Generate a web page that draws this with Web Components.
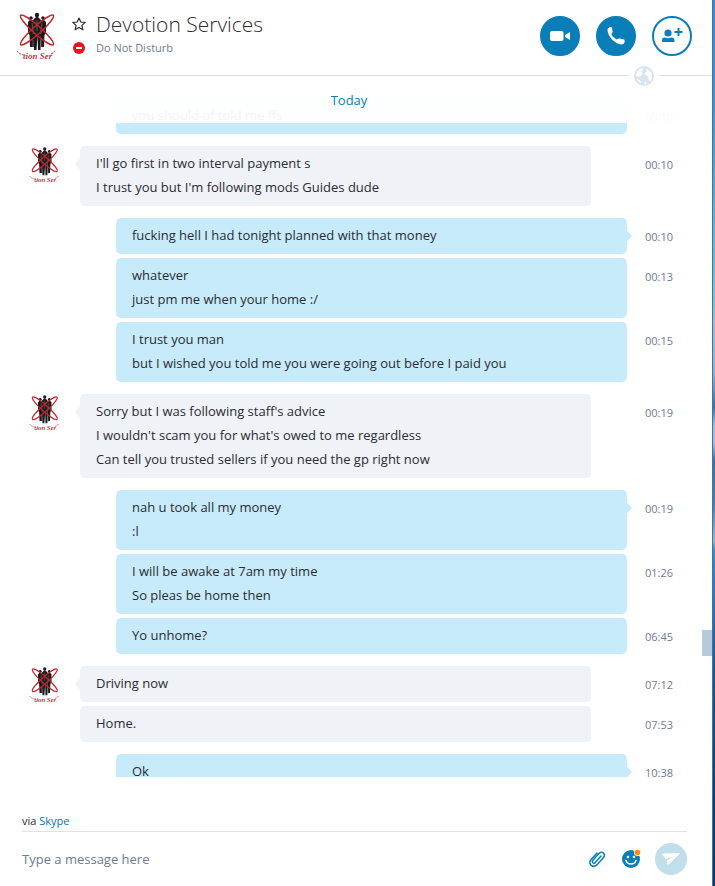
<!DOCTYPE html>
<html lang="en">
<head>
<meta charset="utf-8">
<meta name="viewport" content="width=device-width, initial-scale=1">
<title>Devotion Services</title>
<style>
    body {
        margin: 0;
        font-family: "Open Sans", "Noto Sans", sans-serif;
        font-size: 13px;
        color: #2b2c33;
        --brand: #0a7eb9;
        --line: #d9e4ec;
        --muted: #6e7b91;
        --sent: #c7ebfb;
        --received: #eff2f7;
    }
    p {
        margin: 0;
    }
</style>
</head>
<body>

<chat-window>
    <chat-header slot="header" name="Devotion Services" status="Do Not Disturb"></chat-header>
    <chat-group from="me">
        <chat-message time="00:10"><p>you should of told me ffs</p></chat-message>
    </chat-group>
    <chat-group from="them">
        <chat-message time="00:10"><p>I'll go first in two interval payment s</p><p>I trust you but I'm following mods Guides dude</p></chat-message>
    </chat-group>
    <chat-group from="me">
        <chat-message time="00:10"><p>fucking hell I had tonight planned with that money</p></chat-message>
        <chat-message time="00:13"><p>whatever</p><p>just pm me when your home :/</p></chat-message>
        <chat-message time="00:15"><p>I trust you man</p><p>but I wished you told me you were going out before I paid you</p></chat-message>
    </chat-group>
    <chat-group from="them">
        <chat-message time="00:19"><p>Sorry but I was following staff's advice</p><p>I wouldn't scam you for what's owed to me regardless</p><p>Can tell you trusted sellers if you need the gp right now</p></chat-message>
    </chat-group>
    <chat-group from="me">
        <chat-message time="00:19"><p>nah u took all my money</p><p>:l</p></chat-message>
        <chat-message time="01:26"><p>I will be awake at 7am my time</p><p>So pleas be home then</p></chat-message>
        <chat-message time="06:45"><p>Yo unhome?</p></chat-message>
    </chat-group>
    <chat-group from="them">
        <chat-message time="07:12"><p>Driving now</p></chat-message>
        <chat-message time="07:53"><p>Home.</p></chat-message>
    </chat-group>
    <chat-group from="me">
        <chat-message time="10:38"><p>Ok</p></chat-message>
    </chat-group>
    <chat-composer slot="footer"></chat-composer>
</chat-window>

<script>
class ChatAvatar extends HTMLElement {
    constructor() {
        super();
        this.attachShadow({ mode: 'open' });
        this.shadowRoot.innerHTML = `
            <style>
                :host {
                    display: block;
                    width: 40px;
                }
                svg {
                    display: block;
                    width: 100%;
                    overflow: visible;
                }
                text {
                    font: italic bold 9px "Liberation Serif", serif;
                    fill: #b8403f;
                }
            </style>
            <svg viewBox="0 0 40 50" aria-hidden="true">
                <g fill="#1b1a1c">
                    <circle cx="21" cy="4" r="2.2"/>
                    <circle cx="15" cy="7" r="1.8"/>
                    <circle cx="27" cy="7" r="1.8"/>
                    <path d="M17 9l3-3h2l3 3 2 12-2 2-.5 16H22l-.5-14-1 14H18l-.5-16-2-2z"/>
                    <path d="M12 11l2-2h3l1 3v24h-4l-.5-12-1.500-2zM25 12l.5-3H28l2 2v11l-1.500 2-.5 12h-3z"/>
                </g>
                <path d="M21 9v11M16 12l1.500 11M26 12l-1.500 11M17 29v7M25 29v7" stroke="#999" stroke-width=".5" fill="none"/>
                <g fill="none" stroke="#c3282c" stroke-width="1.5">
                    <ellipse cx="21" cy="19" rx="22" ry="4" transform="rotate(42 21 19)"/>
                    <ellipse cx="21" cy="19" rx="22" ry="4" transform="rotate(-42 21 19)"/>
                </g>
                <path d="M1 40q2 3 7 4M35 43q3-1 4-3" fill="none" stroke="#c3282c" stroke-width="1" stroke-dasharray="2 1"/>
                <text x="7" y="48">tion Ser</text>
            </svg>
        `;
    }
}

class ChatHeader extends HTMLElement {
    constructor() {
        super();
        this.attachShadow({ mode: 'open' });
        this.shadowRoot.innerHTML = `
            <style>
                :host {
                    display: block;
                    position: relative;
                    border-bottom: 1px solid var(--line);
                }
                header {
                    display: flex;
                    align-items: center;
                    gap: 16px;
                    padding: 11px 20px 14px 16px;
                }
                .contact {
                    flex: 1;
                    display: grid;
                    grid-template-columns: 14px 1fr;
                    grid-template-rows: 24px 24px;
                    column-gap: 10px;
                    align-items: center;
                    justify-items: start;
                }
                h1 {
                    margin: 0;
                    font: 300 21px/24px "Open Sans", sans-serif;
                    white-space: nowrap;
                }
                .status {
                    font-size: 11px;
                    line-height: 20px;
                    color: var(--muted);
                }
                svg {
                    display: block;
                }
                button {
                    display: grid;
                    place-items: center;
                    padding: 0;
                    border: 0;
                    background: none;
                    color: inherit;
                    cursor: pointer;
                }
                .actions {
                    display: flex;
                    gap: 16px;
                }
                .actions button {
                    width: 40px;
                    height: 40px;
                    border: 2px solid var(--brand);
                    border-radius: 50%;
                    background: var(--brand);
                    color: #fff;
                }
                .actions .outline {
                    background: #fff;
                    color: var(--brand);
                }
                .globe {
                    position: absolute;
                    right: 53px;
                    bottom: -11px;
                    padding: 0 5px;
                    background: #fff;
                }
            </style>
            <header>
                <chat-avatar></chat-avatar>
                <div class="contact">
                    <button aria-label="Add to favourites">
                        <svg width="14" height="14" viewBox="0 0 14 14" fill="none" stroke="#2b2c33" stroke-width="1.2" stroke-linejoin="round"><path d="M7 1l1.800 4 4.400.4-3.300 3 1 4.400L7 10.500l-3.900 2.300 1-4.400-3.300-3L5.200 5z"/></svg>
                    </button>
                    <h1></h1>
                    <svg width="14" height="14" viewBox="0 0 14 14" aria-hidden="true"><circle cx="7" cy="7" r="6" fill="#e81123"/><path d="M4 7h6" stroke="#fff" stroke-width="2"/></svg>
                    <span class="status"></span>
                </div>
                <div class="actions">
                    <button aria-label="Video call">
                        <svg width="20" height="20" viewBox="0 0 20 20" fill="currentColor"><path d="M2 5h9.500Q13.500 5 13.500 7v6q0 2-2 2H2Q0 15 0 13V7q0-2 2-2zM15 9l5-3v8l-5-3z"/></svg>
                    </button>
                    <button aria-label="Audio call">
                        <svg width="20" height="20" viewBox="0 0 20 20" fill="currentColor"><path d="M3 1.500q2-.8 3 .1l.7 4.300q-.2 1-1.400 1.600.6 3.300 5.400 6 1.800-1.300 2.900-1l4.500 1q1 .8.400 3-.5 2-3.500 2-3.800-.3-8.500-4.500Q1.500 8.500 1.500 4 1.500 2.200 3 1.500z"/></svg>
                    </button>
                    <button class="outline" aria-label="Add people">
                        <svg width="22" height="16" viewBox="0 0 22 16" fill="currentColor"><circle cx="7" cy="5" r="3.6"/><path d="M1 14v-2q0-2.200 2-2.500 1.500 0 2 .3 2 .9 4 0 .5-.3 2-.3 2.500.3 2.500 2.500v2zM16.500 0h2v3h3v2h-3v3h-2V5h-3V3h3z"/></svg>
                    </button>
                </div>
            </header>
            <div class="globe">
                <svg width="20" height="20" viewBox="0 0 20 20" aria-hidden="true"><circle cx="10" cy="10" r="10" fill="#d9e4ec"/><path d="M3.500 5Q6 2 8.500 2.300L9 4l-2 1.500L8.500 7l-1 2.500L4.500 11 2 9.500Q1.900 7 3.500 5zM12 3.500q3-.5 5 2.500 1.500 2.500 1 6-.5 2.500-2 3.500l-1.500-2v-3L12 9.500 11 7l1.500-1zM3 13l3 1 1.500 3.500Q4.500 16.500 3 13zM11 15l1.500 2.500q-1 .6-2 .5z" fill="#fff"/></svg>
            </div>
        `;
    }

    connectedCallback() {
        this.shadowRoot.querySelector('h1').textContent = this.getAttribute('name');
        this.shadowRoot.querySelector('.status').textContent = this.getAttribute('status');
    }
}

class ChatMessage extends HTMLElement {
    constructor() {
        super();
        this.attachShadow({ mode: 'open' });
        this.shadowRoot.innerHTML = `
            <style>
                :host {
                    display: flex;
                    gap: 18px;
                }
                .bubble {
                    position: relative;
                    flex: 1;
                    margin: var(--bubble-margin);
                    padding: 5px 16px 7px;
                    border-radius: 5px;
                    background: var(--bubble);
                    line-height: 24px;
                }
                /* tail on the first bubble of a group */
                :host(:first-child) .bubble::after {
                    content: "";
                    position: absolute;
                    top: 12px;
                    left: var(--tail-left);
                    right: var(--tail-right);
                    width: 10px;
                    height: 12px;
                    background: var(--bubble);
                    clip-path: polygon(50% 0, 100% 50%, 50% 100%, 0 50%);
                }
                time {
                    width: 67px;
                    padding-top: 9px;
                    font-size: 11px;
                    line-height: 20px;
                    color: var(--muted);
                }
            </style>
            <div class="bubble"><slot></slot></div>
            <time></time>
        `;
    }

    connectedCallback() {
        this.shadowRoot.querySelector('time').textContent = this.getAttribute('time');
    }
}

class ChatGroup extends HTMLElement {
    constructor() {
        super();
        this.attachShadow({ mode: 'open' });
        this.shadowRoot.innerHTML = `
            <style>
                :host {
                    display: grid;
                    grid-template-columns: 30px 1fr;
                    column-gap: 21px;
                    padding-left: 29px;
                    --bubble: var(--sent);
                    --bubble-margin: 0 0 0 36px;
                    --tail-left: auto;
                    --tail-right: -5px;
                }
                :host([from="them"]) {
                    --bubble: var(--received);
                    --bubble-margin: 0 36px 0 0;
                    --tail-left: -5px;
                    --tail-right: auto;
                }
                chat-avatar {
                    width: 30px;
                }
                :host([from="me"]) chat-avatar {
                    display: none;
                }
                .list {
                    grid-column: 2;
                    display: flex;
                    flex-direction: column;
                    gap: 4px;
                }
            </style>
            <chat-avatar></chat-avatar>
            <div class="list"><slot></slot></div>
        `;
    }
}

class ChatComposer extends HTMLElement {
    constructor() {
        super();
        this.attachShadow({ mode: 'open' });
        this.shadowRoot.innerHTML = `
            <style>
                :host {
                    display: block;
                    padding: 34px 25px 0 22px;
                }
                .via {
                    border-bottom: 1px solid var(--line);
                    font-size: 11px;
                    line-height: 20px;
                }
                a {
                    color: #0078c2;
                    text-decoration: none;
                }
                form {
                    display: flex;
                    align-items: center;
                    height: 54px;
                }
                input {
                    flex: 1;
                    min-width: 0;
                    padding: 0;
                    border: 0;
                    outline: 0;
                    background: none;
                    font: inherit;
                    color: inherit;
                }
                input::placeholder {
                    color: var(--muted);
                    opacity: 1;
                }
                button {
                    display: grid;
                    place-items: center;
                    padding: 0;
                    border: 0;
                    background: none;
                    color: var(--brand);
                    cursor: pointer;
                }
                svg {
                    display: block;
                }
                .tools {
                    display: flex;
                    align-items: center;
                    gap: 14px;
                }
                .send {
                    width: 32px;
                    height: 32px;
                    border-radius: 50%;
                    background: #c1deeb;
                    color: #fff;
                }
            </style>
            <div class="via">via <a href="#skype">Skype</a></div>
            <form>
                <input type="text" placeholder="Type a message here" aria-label="Message">
                <div class="tools">
                    <button type="button" aria-label="Attach file">
                        <svg width="20" height="20" viewBox="0 0 20 20" fill="none" stroke="currentColor" stroke-width="1.5" stroke-linecap="round"><path d="M14 7l-5.800 6.600q-1.300 1.200-2.400.2-1-1.200.1-2.500l6.200-7q2.200-2.100 4.300-.3 2 2.100.1 4.400l-6.700 7.500q-2.800 2.700-5.600.5-2.600-2.600-.3-5.600L10 4"/></svg>
                    </button>
                    <button type="button" aria-label="Emoticons">
                        <svg width="20" height="20" viewBox="0 0 20 20"><circle cx="10" cy="10" r="9" fill="currentColor"/><circle cx="7" cy="8" r="1.3" fill="#fff"/><circle cx="13" cy="8" r="1.3" fill="#fff"/><path d="M5 11.500q1 3.500 5 3.500t5-3.500" fill="none" stroke="#fff" stroke-width="1.5" stroke-linecap="round"/><circle cx="16.5" cy="3.5" r="3.5" fill="#fff"/><circle cx="16.5" cy="3.5" r="2.8" fill="#ff8c00"/></svg>
                    </button>
                    <button class="send" aria-label="Send">
                        <svg width="18" height="14" viewBox="0 0 18 14" fill="currentColor"><path d="M1 1.500L17 1q1 .2.500 1L6.500 12.500q-1 .8-1.300-.5L4.800 8.500 11 4.500 3.800 7 .5 3Q-.3 1.700 1 1.500z"/></svg>
                    </button>
                </div>
            </form>
        `;
    }
}

class ChatWindow extends HTMLElement {
    constructor() {
        super();
        this.attachShadow({ mode: 'open' });
        this.shadowRoot.innerHTML = `
            <style>
                :host {
                    display: grid;
                    grid-template-columns: 1fr 3px;
                    height: 100vh;
                }
                .window {
                    display: flex;
                    flex-direction: column;
                    min-width: 0;
                    min-height: 0;
                    background: #fff;
                }
                main {
                    position: relative;
                    flex: 1;
                    min-height: 0;
                    overflow: hidden;
                }
                .history {
                    display: flex;
                    flex-direction: column;
                    gap: 12px;
                    padding-top: 22px;
                }
                .day {
                    position: absolute;
                    inset: 0 0 auto;
                    height: 47px;
                    padding-right: 14px;
                    box-sizing: border-box;
                    background: rgba(255, 255, 255, .95);
                    color: var(--brand);
                    line-height: 48px;
                    text-align: center;
                }
                .thumb {
                    position: absolute;
                    top: 79%;
                    right: 0;
                    width: 10px;
                    height: 26px;
                    background: #b5cadb;
                }
                ::slotted([slot="header"]) {
                    z-index: 1;
                }
                .desktop {
                    border-left: 1px solid #49739b;
                    background: linear-gradient(#3988d4 0, #4396cf 14%, #66b9cd 28%, #79c5c9 35%, #a1bdc9 36%, #91b1c9 42%, #3870ae 46%, #a5bfd2 48%, #a5bfd2 50%, #3c6fa9 52%, #4a7dac 57%, #9bb6c8 61%, #3b8aca 62%, #195591 77%, #0d3f75 90%, #0b376a 100%);
                }
            </style>
            <div class="window">
                <slot name="header"></slot>
                <main>
                    <div class="history"><slot></slot></div>
                    <div class="day">Today</div>
                    <div class="thumb"></div>
                </main>
                <slot name="footer"></slot>
            </div>
            <div class="desktop"></div>
        `;
    }
}

customElements.define('chat-avatar', ChatAvatar);
customElements.define('chat-header', ChatHeader);
customElements.define('chat-message', ChatMessage);
customElements.define('chat-group', ChatGroup);
customElements.define('chat-composer', ChatComposer);
customElements.define('chat-window', ChatWindow);
</script>
</body>
</html>
